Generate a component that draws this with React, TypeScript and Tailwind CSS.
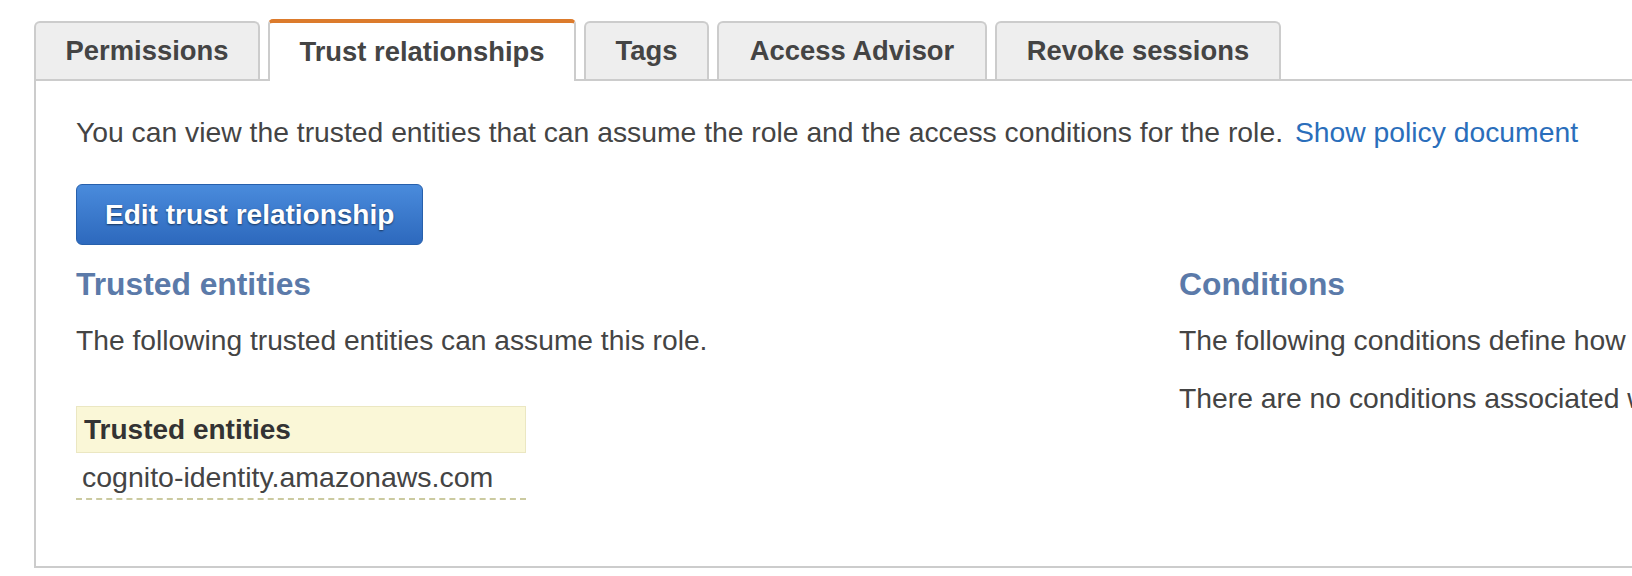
import { type ReactNode } from "react";

const tabs = [
  { label: "Permissions", width: "w-[226px]" },
  { label: "Trust relationships", width: "w-[308px]", active: true },
  { label: "Tags", width: "w-[125px]" },
  { label: "Access Advisor", width: "w-[270px]" },
  { label: "Revoke sessions", width: "w-[286px]" },
];

function Tab({
  label,
  width,
  active,
}: {
  label: string;
  width: string;
  active?: boolean;
}) {
  if (active) {
    return (
      <div
        className={`${width} relative -mb-[2px] flex h-[62px] items-center justify-center rounded-t-[5px] border-x-2 border-t-4 border-x-[#cccccc] border-t-[#dc7b2c] bg-white text-[27.4px] font-bold text-[#444444]`}
      >
        {label}
      </div>
    );
  }
  return (
    <div
      className={`${width} flex h-[58px] items-center justify-center rounded-t-[6px] border-x-2 border-t-2 border-[#cccccc] bg-[#eeeeee] text-[27.4px] font-bold text-[#444444]`}
    >
      {label}
    </div>
  );
}

function Heading({ children }: { children: ReactNode }) {
  return (
    <h2 className="text-[31.8px] font-bold leading-[40px] text-[#5b7aa9]">
      {children}
    </h2>
  );
}

export default function App() {
  return (
    <div className="h-[576px] w-[1632px] overflow-hidden bg-white font-['Liberation_Sans',Arial,sans-serif] text-[#444444]">
      <div className="relative z-10 flex items-end gap-[8px] pl-[34px] pt-[19px]">
        {tabs.map((t) => (
          <Tab key={t.label} {...t} />
        ))}
      </div>

      <div className="ml-[34px] h-[489px] w-[2400px] border-y-2 border-l-2 border-[#cccccc] pl-[40px] pt-[31px]">
        <p className="text-[28.3px] leading-[40px]">
          You can view the trusted entities that can assume the role and the
          access conditions for the role.{" "}
          <a href="#" className="ml-[4px] text-[#2a6ebb]">
            Show policy document
          </a>
        </p>

        <button className="mt-[32px] flex h-[61px] items-center rounded-[6px] border border-[#2760ac] bg-gradient-to-b from-[#4a8bdc] to-[#2d69bd] px-[28px] text-[28px] font-bold text-white [text-shadow:0_1px_2px_rgba(0,0,0,0.55)]">
          Edit trust relationship
        </button>

        <div className="mt-[19px] flex">
          <div className="w-[1103px]">
            <Heading>Trusted entities</Heading>
            <p className="mt-[16px] text-[28.2px] leading-[40px]">
              The following trusted entities can assume this role.
            </p>

            <div className="mt-[46px] w-[450px]">
              <div className="flex h-[47px] items-center border border-[#ebe7c2] bg-[#faf7d7] px-[7px] text-[28px] font-bold text-[#333333]">
                Trusted entities
              </div>
              <div className="h-[47px] border-b-2 border-dashed border-[#cbcaa0] px-[6px] pt-[4px] text-[28.5px] leading-[40px]">
                cognito-identity.amazonaws.com
              </div>
            </div>
          </div>

          <div className="flex-1">
            <Heading>Conditions</Heading>
            <p className="mt-[16px] whitespace-nowrap text-[28.3px] leading-[40px]">
              The following conditions define how and when trusted entities can
              assume the role.
            </p>
            <p className="mt-[18px] whitespace-nowrap text-[28.3px] leading-[40px]">
              There are no conditions associated with this role.
            </p>
          </div>
        </div>
      </div>
    </div>
  );
}
